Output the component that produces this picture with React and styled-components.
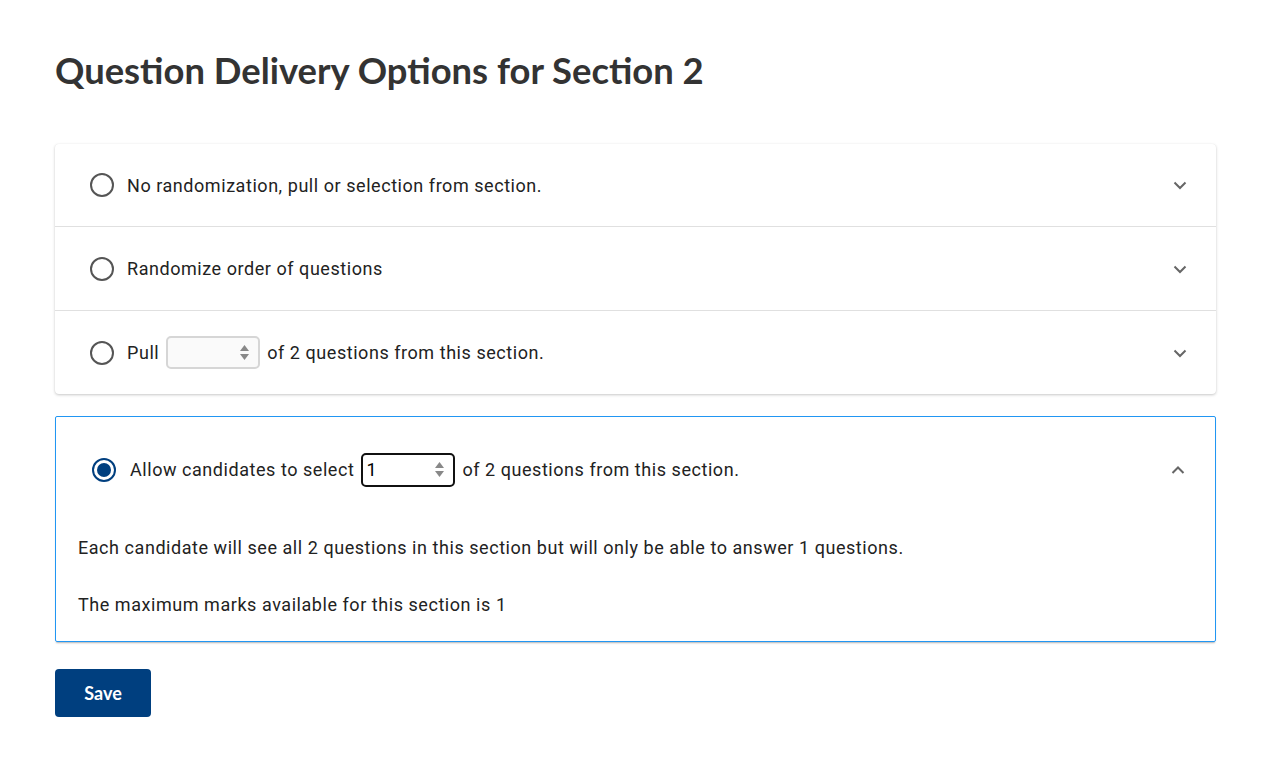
import React, { useState } from "react";
import styled, { createGlobalStyle } from "styled-components";

const Global = createGlobalStyle`
  html, body { margin: 0; padding: 0; background: #fff; }
  body { font-family: Roboto, "Noto Sans", sans-serif; color: #222; }
  * { box-sizing: border-box; }
`;

const Page = styled.div`
  padding: 47px 62px 40px 55px;
  display: flex;
  flex-direction: column;
`;

const Title = styled.h1`
  font-family: Lato, "Open Sans", sans-serif;
  font-weight: 700;
  font-size: 36.4px;
  line-height: 46px;
  color: #333;
  margin: 0 0 51px 0;
`;

const Group = styled.div`
  background: #fff;
  border-radius: 4px;
  box-shadow: 0 1px 3px rgba(0, 0, 0, 0.22), 0 0 1px rgba(0, 0, 0, 0.06);
  display: flex;
  flex-direction: column;
`;

const Row = styled.div`
  height: ${(p) => (p.$first ? "82px" : "84px")};
  display: flex;
  align-items: center;
  padding: 0 28px 0 35px;
  border-top: ${(p) => (p.$first ? "none" : "1px solid #e0e0e0")};
`;

const Label = styled.div`
  flex: 1;
  display: flex;
  align-items: center;
  gap: 7px;
  font-size: 18px;
  letter-spacing: 0.55px;
  color: #222;
`;

const Radio = styled.span`
  width: 24px;
  height: 24px;
  border-radius: 50%;
  border: 2px solid ${(p) => (p.$checked ? "#003f7f" : "#555")};
  display: inline-flex;
  align-items: center;
  justify-content: center;
  margin-right: ${(p) => (p.$checked ? "7px" : "6px")};
  margin-left: ${(p) => (p.$checked ? "1px" : "0")};
  flex-shrink: 0;
  &::after {
    content: "";
    width: 14px;
    height: 14px;
    border-radius: 50%;
    background: ${(p) => (p.$checked ? "#003f7f" : "transparent")};
  }
`;

const NumBox = styled.span`
  width: 94px;
  height: ${(p) => (p.$focus ? "34px" : "33px")};
  border-radius: 5px;
  border: ${(p) => (p.$focus ? "2px solid #111" : "2px solid #d6d6d6")};
  background: ${(p) => (p.$focus ? "#fff" : "#fafafa")};
  display: inline-flex;
  align-items: center;
  padding: 0 8px 0 3px;
  font-size: 18px;
  letter-spacing: 0;
  color: #000;
`;

const NumValue = styled.span`
  flex: 1;
`;

const Spinner = styled.svg`
  width: 11px;
  height: 19px;
`;

const Chevron = styled.svg`
  width: 16px;
  height: 16px;
  flex-shrink: 0;
`;

const OpenCard = styled.div`
  margin-top: 22px;
  border: 1px solid rgb(33, 150, 243);
  border-radius: 2px;
  box-shadow: 0 2px 2px -1px rgba(0, 0, 0, 0.3);
  display: flex;
  flex-direction: column;
`;

const OpenHead = styled.div`
  height: 105px;
  display: flex;
  align-items: center;
  padding: 0 29px 0 35px;
`;

const Body = styled.div`
  padding: 15px 22px 26px 22px;
  display: flex;
  flex-direction: column;
  gap: 36px;
  font-size: 18px;
  letter-spacing: 0.55px;
  color: #222;
`;

const Para = styled.p`
  margin: 0;
  line-height: 21px;
`;

const SaveButton = styled.button`
  margin-top: 27px;
  align-self: flex-start;
  width: 96px;
  height: 48px;
  border: none;
  border-radius: 4px;
  background: #003f7f;
  color: #fff;
  font-family: Lato, "Open Sans", sans-serif;
  font-weight: 700;
  font-size: 18px;
  cursor: pointer;
`;

const Down = () => (
  <Chevron viewBox="0 0 16 16">
    <path d="M2.5 5.5 L8 11 L13.5 5.5" fill="none" stroke="#666" strokeWidth="2" />
  </Chevron>
);

const Up = () => (
  <Chevron viewBox="0 0 16 16">
    <path d="M2.5 11 L8 5.5 L13.5 11" fill="none" stroke="#666" strokeWidth="2" />
  </Chevron>
);

const Spin = () => (
  <Spinner viewBox="0 0 11 19">
    <path d="M1 8 L5.5 2 L10 8 Z" fill="#888" />
    <path d="M1 11 L5.5 17 L10 11 Z" fill="#888" />
  </Spinner>
);

export default function App() {
  const [value] = useState("1");
  return (
    <>
      <Global />
      <Page>
        <Title>Question Delivery Options for Section 2</Title>
        <Group>
          <Row $first>
            <Label>
              <Radio />
              No randomization, pull or selection from section.
            </Label>
            <Down />
          </Row>
          <Row>
            <Label>
              <Radio />
              Randomize order of questions
            </Label>
            <Down />
          </Row>
          <Row>
            <Label>
              <Radio />
              Pull
              <NumBox>
                <NumValue />
                <Spin />
              </NumBox>
              of 2 questions from this section.
            </Label>
            <Down />
          </Row>
        </Group>
        <OpenCard>
          <OpenHead>
            <Label>
              <Radio $checked />
              Allow candidates to select
              <NumBox $focus>
                <NumValue>{value}</NumValue>
                <Spin />
              </NumBox>
              of 2 questions from this section.
            </Label>
            <Up />
          </OpenHead>
          <Body>
            <Para>
              Each candidate will see all 2 questions in this section but will only be able to answer 1 questions.
            </Para>
            <Para>The maximum marks available for this section is 1</Para>
          </Body>
        </OpenCard>
        <SaveButton>Save</SaveButton>
      </Page>
    </>
  );
}
